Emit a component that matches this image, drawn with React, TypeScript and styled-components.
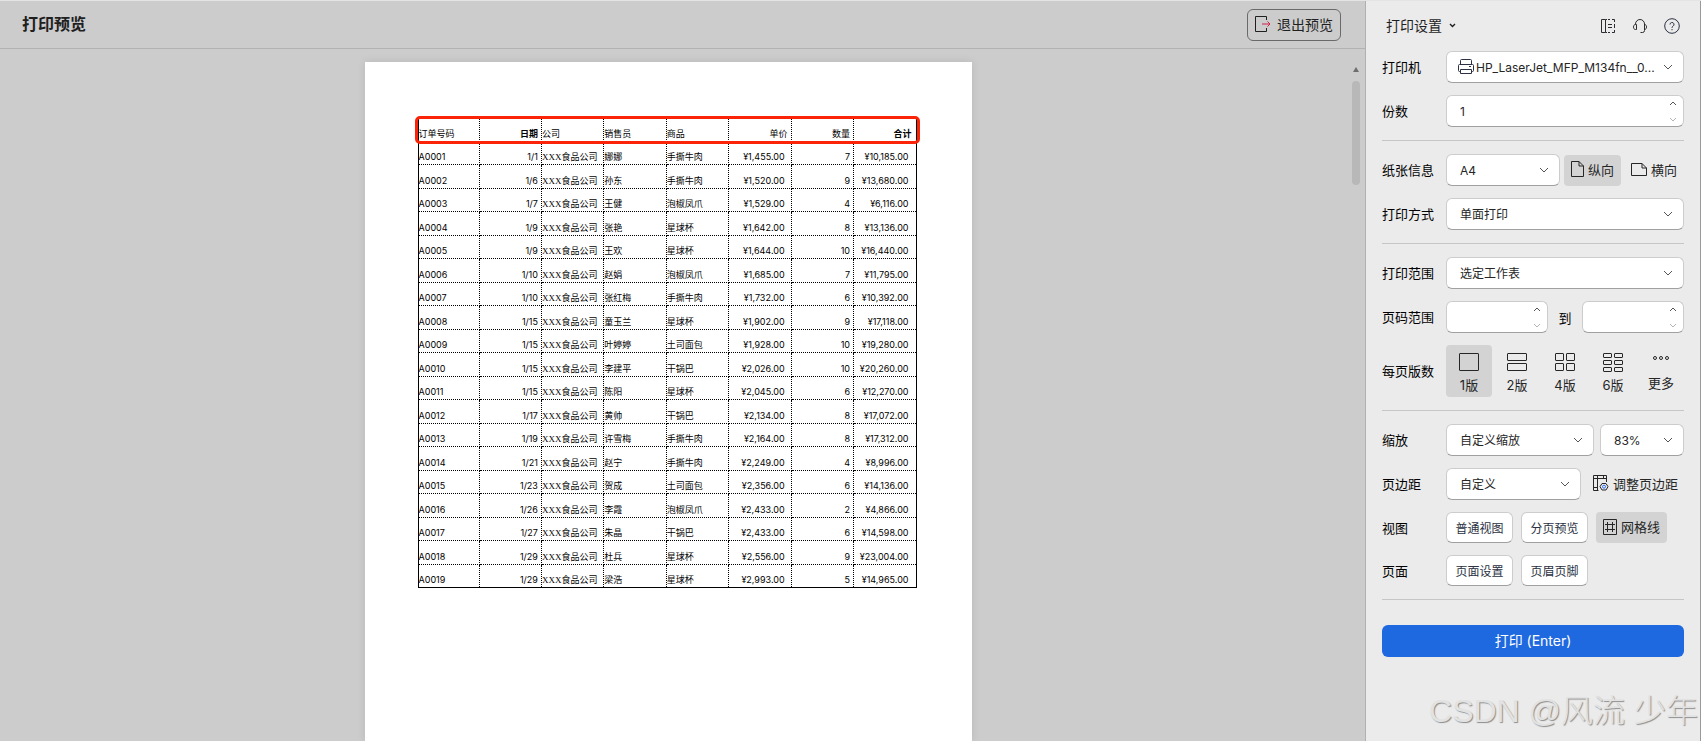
import React from "react";
import styled, { createGlobalStyle, css } from "styled-components";

const GlobalStyle = createGlobalStyle`
  *, *::before, *::after { box-sizing: border-box; }
  body { margin: 0; }
  body, button, input, select {
    font-family: Inter, "Noto Sans CJK SC", sans-serif;
  }
`;

const Shell = styled.div`
  display: flex;
  height: 100vh;
  overflow: hidden;
  background: #cccccc;
  border-top: 1px solid #e4e4e4;
  color: #1f1f1f;
`;

const Main = styled.main`
  flex: 1;
  min-width: 0;
  display: flex;
  flex-direction: column;
`;

const TopBar = styled.header`
  display: flex;
  align-items: center;
  justify-content: space-between;
  height: 48px;
  flex-shrink: 0;
  padding: 0 24px 0 22px;
  border-bottom: 1px solid #b2b2b2;
`;

const Title = styled.h1`
  margin: 0;
  padding-bottom: 2px;
  font-size: 16px;
  line-height: 24px;
  font-weight: 600;
`;

const ExitButton = styled.button`
  display: flex;
  align-items: center;
  gap: 6px;
  height: 32px;
  padding: 0 7px 2px;
  border: 1px solid #6a6a6a;
  border-radius: 6px;
  background: transparent;
  color: #1f1f1f;
  font-size: 14px;
`;

const Stage = styled.div`
  flex: 1;
  min-height: 0;
  display: grid;
  grid-template-columns: 1fr 29px;
`;

const Sheet = styled.section`
  justify-self: center;
  width: 607px;
  margin-top: 13px;
  padding: 56px 55px 0 53px;
  background: #ffffff;
  box-shadow: 0 0 8px rgba(0, 0, 0, 0.1);
`;

const ScrollTrack = styled.div`
  display: flex;
  flex-direction: column;
  align-items: flex-end;
  gap: 9px;
  padding: 18px 5px 0 0;
`;

const ScrollUp = styled.svg`
  margin-right: 1px;
`;

const ScrollThumb = styled.div`
  width: 8px;
  height: 104px;
  border-radius: 4px;
  background: #b8b8b8;
`;

const TableFrame = styled.div`
  position: relative;
`;

const HeaderHighlight = styled.div`
  position: absolute;
  top: -2px;
  left: -3px;
  right: -3px;
  height: 28px;
  border: 3px solid #fb2408;
  border-radius: 5px;
`;

const Orders = styled.table`
  width: 100%;
  table-layout: fixed;
  border-collapse: collapse;
  border: 1px solid #000000;
  color: #000000;
  font-size: 9px;
  line-height: 12px;

  tr { height: 23px; }
  tbody tr:nth-child(even) { height: 24px; }
  th:first-child { width: 61px; }
`;

const cell = css<{ $end?: number }>`
  padding: 0 ${(p) => p.$end ?? 0}px 1px 0;
  border: 1px dotted #000000;
  text-align: ${(p) => (p.$end ? "right" : "left")};
  vertical-align: bottom;
  white-space: nowrap;
`;

const HeadCell = styled.th<{ $end?: number; $strong?: boolean }>`
  ${cell}
  font-weight: ${(p) => (p.$strong ? 700 : 400)};
`;

const Cell = styled.td<{ $end?: number; $serif?: boolean }>`
  ${cell}
  font-family: ${(p) => (p.$serif ? '"Liberation Serif"' : "Inter")}, "Noto Sans CJK SC", sans-serif;
`;

const Panel = styled.aside`
  flex: 0 0 336px;
  display: flex;
  flex-direction: column;
  padding: 0 16px;
  border-left: 1px solid #b0b0b0;
  border-right: 1px solid #9a9a9a;
  background: #ebebeb;
`;

const PanelHead = styled.div`
  display: flex;
  align-items: center;
  justify-content: space-between;
  height: 50px;
  padding: 0 4px;
`;

const PanelTitle = styled.button`
  display: flex;
  align-items: center;
  gap: 7px;
  padding: 0 0 2px;
  border: 0;
  background: none;
  color: #1f1f1f;
  font-size: 14px;
`;

const Tools = styled.div`
  display: flex;
  gap: 16px;
`;

const IconButton = styled.button`
  display: flex;
  padding: 0;
  border: 0;
  background: none;
  color: #2c2c30;
`;

const Group = styled.div`
  display: flex;
  flex-direction: column;
  gap: 12px;
  padding-bottom: 13px;
  margin-bottom: 13px;
  border-bottom: 1px solid #c6c6c6;
`;

const Row = styled.div`
  display: flex;
  align-items: center;
`;

const RowLabel = styled.label`
  flex: 0 0 64px;
  color: #000000;
  font-size: 13px;
  line-height: 20px;
`;

const Controls = styled.div<{ $gap?: number }>`
  flex: 1;
  min-width: 0;
  display: flex;
  align-items: center;
  gap: ${(p) => p.$gap ?? 8}px;
`;

const raised = css`
  border: 1px solid #cccccc;
  border-bottom-color: #a0a0a0;
  border-radius: 6px;
  background: #ffffff;
`;

const Field = styled.div<{ $width?: number }>`
  ${raised}
  flex: ${(p) => (p.$width ? `0 0 ${p.$width}px` : "1")};
  min-width: 0;
  display: grid;
  align-items: center;
  height: 32px;

  > * { grid-area: 1 / 1; }
`;

const SelectInput = styled.select<{ $icon?: boolean }>`
  appearance: none;
  width: 100%;
  height: 30px;
  padding: 0 ${(p) => (p.$icon ? 24 : 28)}px 0 ${(p) => (p.$icon ? 29 : 13)}px;
  border: 0;
  border-radius: 6px;
  background: transparent;
  color: #262626;
  font-size: 12px;
`;

const FieldChevron = styled.svg`
  justify-self: end;
  margin-right: 10px;
  pointer-events: none;
`;

const FieldIcon = styled.svg`
  margin-left: 11px;
  pointer-events: none;
`;

const NumberInput = styled.input`
  width: 100%;
  height: 30px;
  padding: 0 24px 0 13px;
  border: 0;
  border-radius: 6px;
  background: transparent;
  color: #262626;
  font-size: 12px;
`;

const Stepper = styled.div`
  justify-self: end;
  display: flex;
  flex-direction: column;
  justify-content: space-between;
  height: 30px;
  padding: 5px 6px 4px 0;
`;

const StepButton = styled(IconButton)<{ $muted?: boolean }>`
  color: ${(p) => (p.$muted ? "#b4b4b4" : "#555555")};
`;

const Toggle = styled.button<{ $on?: boolean; $inset?: number }>`
  display: flex;
  align-items: center;
  gap: 4px;
  height: 31px;
  padding: 0 ${(p) => p.$inset ?? 6}px 2px;
  border: 0;
  border-radius: 4px;
  background: ${(p) => (p.$on ? "#d3d3d3" : "transparent")};
  color: #262626;
  font-size: 13px;
  white-space: nowrap;
`;

const LayoutOption = styled.button<{ $on?: boolean }>`
  display: flex;
  flex-direction: column;
  align-items: center;
  gap: 3px;
  width: 46px;
  height: 52px;
  padding: 7px 0 0;
  border: 0;
  border-radius: 4px;
  background: ${(p) => (p.$on ? "#d3d3d3" : "transparent")};
  color: #262626;
  font-size: 13px;
  line-height: 20px;
`;

const PushButton = styled.button`
  ${raised}
  width: 67px;
  height: 31px;
  padding: 0;
  color: #2b3142;
  font-size: 12px;
`;

const To = styled.span`
  flex: 0 0 34px;
  text-align: center;
  color: #000000;
  font-size: 13px;
`;

const PrintButton = styled.button`
  height: 32px;
  margin-top: 12px;
  padding: 0 0 2px;
  border: 0;
  border-radius: 6px;
  background: #1e69e0;
  color: #ffffff;
  font-size: 14px;
`;

const Watermark = styled.div`
  position: absolute;
  right: 3px;
  bottom: 6px;
  color: #e2e2e2;
  font-family: "Liberation Sans", "Noto Sans CJK SC", sans-serif;
  font-size: 32px;
  font-weight: 300;
  line-height: 48px;
  text-shadow: 1px 1px 1px #8c8c8c;
  white-space: nowrap;
  pointer-events: none;
`;

const stroke = { fill: "none", stroke: "currentColor", strokeWidth: 1 } as const;

const ChevronDown = () => (
  <FieldChevron width="10" height="6" viewBox="0 0 10 6" fill="none" stroke="#555555">
    <path d="M1 1l4 4 4-4" />
  </FieldChevron>
);

type PickerProps = { id: string; label?: string; value: string; width?: number };

const Picker = ({ id, label, value, width }: PickerProps) => (
  <Field $width={width}>
    <SelectInput id={id} aria-label={label}>
      <option>{value}</option>
    </SelectInput>
    <ChevronDown />
  </Field>
);

type SpinProps = { id: string; label?: string; value?: string };

const Spin = ({ id, label, value = "" }: SpinProps) => (
  <Field>
    <NumberInput id={id} aria-label={label} inputMode="numeric" defaultValue={value} />
    <Stepper>
      <StepButton aria-label="增加">
        <svg width="8" height="5" viewBox="0 0 8 5" {...stroke}><path d="M1 4l3-3 3 3" /></svg>
      </StepButton>
      <StepButton aria-label="减少" $muted>
        <svg width="8" height="5" viewBox="0 0 8 5" {...stroke}><path d="M1 1l3 3 3-3" /></svg>
      </StepButton>
    </Stepper>
  </Field>
);

const gridIcon = (cols: number, rows: number) => {
  const w = cols === 1 ? 19 : 8;
  const h = rows === 1 ? 17 : rows === 2 ? 7 : 4;
  const stepX = 11;
  const stepY = rows === 2 ? 10 : 7;
  return (
    <svg width="20" height="20" viewBox="0 0 20 20" {...stroke}>
      {Array.from({ length: cols * rows }, (_, i) => (
        <rect
          key={i}
          x={0.5 + (i % cols) * stepX}
          y={1.5 + Math.floor(i / cols) * stepY}
          width={w}
          height={h}
          rx="0.5"
        />
      ))}
    </svg>
  );
};

const layouts = [
  { name: "1版", icon: gridIcon(1, 1) },
  { name: "2版", icon: gridIcon(1, 2) },
  { name: "4版", icon: gridIcon(2, 2) },
  { name: "6版", icon: gridIcon(2, 3) },
  {
    name: "更多",
    icon: (
      <svg width="18" height="18" viewBox="0 0 18 18" {...stroke}>
        <circle cx="3" cy="6" r="1.5" />
        <circle cx="9" cy="6" r="1.5" />
        <circle cx="15" cy="6" r="1.5" />
      </svg>
    ),
  },
];

const orders = [
  ["A0001", "1/1", "娜娜", "手撕牛肉", "1,455.00", "7", "10,185.00"],
  ["A0002", "1/6", "孙东", "手撕牛肉", "1,520.00", "9", "13,680.00"],
  ["A0003", "1/7", "王健", "泡椒凤爪", "1,529.00", "4", "6,116.00"],
  ["A0004", "1/9", "张艳", "星球杯", "1,642.00", "8", "13,136.00"],
  ["A0005", "1/9", "王欢", "星球杯", "1,644.00", "10", "16,440.00"],
  ["A0006", "1/10", "赵娟", "泡椒凤爪", "1,685.00", "7", "11,795.00"],
  ["A0007", "1/10", "张红梅", "手撕牛肉", "1,732.00", "6", "10,392.00"],
  ["A0008", "1/15", "童玉兰", "星球杯", "1,902.00", "9", "17,118.00"],
  ["A0009", "1/15", "叶婷婷", "土司面包", "1,928.00", "10", "19,280.00"],
  ["A0010", "1/15", "李建平", "干锅巴", "2,026.00", "10", "20,260.00"],
  ["A0011", "1/15", "陈阳", "星球杯", "2,045.00", "6", "12,270.00"],
  ["A0012", "1/17", "黄帅", "干锅巴", "2,134.00", "8", "17,072.00"],
  ["A0013", "1/19", "许雪梅", "手撕牛肉", "2,164.00", "8", "17,312.00"],
  ["A0014", "1/21", "赵宁", "手撕牛肉", "2,249.00", "4", "8,996.00"],
  ["A0015", "1/23", "贺成", "土司面包", "2,356.00", "6", "14,136.00"],
  ["A0016", "1/26", "李霞", "泡椒凤爪", "2,433.00", "2", "4,866.00"],
  ["A0017", "1/27", "朱晶", "干锅巴", "2,433.00", "6", "14,598.00"],
  ["A0018", "1/29", "杜兵", "星球杯", "2,556.00", "9", "23,004.00"],
  ["A0019", "1/29", "梁浩", "星球杯", "2,993.00", "5", "14,965.00"],
];

const OrderTable = () => (
  <TableFrame>
    <Orders>
      <thead>
        <tr>
          <HeadCell>订单号码</HeadCell>
          <HeadCell $end={3} $strong>日期</HeadCell>
          <HeadCell>公司</HeadCell>
          <HeadCell>销售员</HeadCell>
          <HeadCell>商品</HeadCell>
          <HeadCell $end={3}>单价</HeadCell>
          <HeadCell $end={3}>数量</HeadCell>
          <HeadCell $end={4} $strong>合计</HeadCell>
        </tr>
      </thead>
      <tbody>
        {orders.map(([id, date, seller, product, price, count, total]) => (
          <tr key={id}>
            <Cell>{id}</Cell>
            <Cell $end={3}>{date}</Cell>
            <Cell $serif>XXX食品公司</Cell>
            <Cell>{seller}</Cell>
            <Cell>{product}</Cell>
            <Cell $end={6}>¥{price}</Cell>
            <Cell $end={3}>{count}</Cell>
            <Cell $end={7}>¥{total}</Cell>
          </tr>
        ))}
      </tbody>
    </Orders>
    <HeaderHighlight />
  </TableFrame>
);

const Settings = () => (
  <Panel>
    <PanelHead>
      <PanelTitle>
        打印设置
        <svg width="7" height="5" viewBox="0 0 7 5" fill="none" stroke="currentColor" strokeWidth="1.4">
          <path d="M1 1l2.500 2.500L6 1" />
        </svg>
      </PanelTitle>
      <Tools>
        <IconButton aria-label="侧栏">
          <svg width="16" height="16" viewBox="0 0 16 16" {...stroke}>
            <path d="M5.500 1.500h-4v13h4zM8 1.500h2M12 1.500h2.500V4M14.500 6v4M14.500 12v2.500H12M10 14.500H8M5.500 1.500H7M5.500 14.500H7M8 6.500h4M8 9.500h4" />
          </svg>
        </IconButton>
        <IconButton aria-label="客服">
          <svg width="16" height="16" viewBox="0 0 16 16" {...stroke}>
            <path d="M3.500 6.500V6a4.500 4.500 0 0 1 9 0v6.500a2 2 0 0 1-2 2H8.500M4.500 6.500h-1C2 6.500 1.500 7.800 1.500 9s.5 2.500 2 2.500h1zM12.500 6.500c1.500 0 2 1.300 2 2.500s-.5 2.500-2 2.500" />
          </svg>
        </IconButton>
        <IconButton aria-label="帮助">
          <svg width="16" height="16" viewBox="0 0 16 16" fill="none" stroke="#2b3142">
            <circle cx="8" cy="8" r="7.300" />
            <path d="M6 6.500a2 2 0 1 1 3 1.700c-.7.4-1 .8-1 1.600M8 11v1.200" />
          </svg>
        </IconButton>
      </Tools>
    </PanelHead>

    <Group>
      <Row>
        <RowLabel htmlFor="printer">打印机</RowLabel>
        <Controls>
          <Field>
            <FieldIcon width="16" height="16" viewBox="0 0 16 16" fill="none" stroke="#2b3142">
              <path d="M2.500 5.500v-4a1 1 0 0 1 1-1h9a1 1 0 0 1 1 1v4M2.500 12.500h-1a1 1 0 0 1-1-1v-5a1 1 0 0 1 1-1h13a1 1 0 0 1 1 1v5a1 1 0 0 1-1 1h-1M2.500 10.500h11v4h-11zM11 7.500h2" />
            </FieldIcon>
            <SelectInput id="printer" $icon>
              <option>HP_LaserJet_MFP_M134fn__0...</option>
            </SelectInput>
            <ChevronDown />
          </Field>
        </Controls>
      </Row>
      <Row>
        <RowLabel htmlFor="copies">份数</RowLabel>
        <Controls>
          <Spin id="copies" value="1" />
        </Controls>
      </Row>
    </Group>

    <Group>
      <Row>
        <RowLabel htmlFor="paper">纸张信息</RowLabel>
        <Controls $gap={4}>
          <Picker id="paper" value="A4" width={114} />
          <Toggle $on $inset={7}>
            <svg width="13" height="16" viewBox="0 0 13 16" {...stroke}>
              <path d="M.5.500h7.500l4.500 4.500v10.500H.5zM8 .5V5h4.500" />
            </svg>
            纵向
          </Toggle>
          <Toggle>
            <svg width="16" height="13" viewBox="0 0 16 13" {...stroke}>
              <path d="M.5.500h10.500l4.500 4.500v7.500H.5zM11 .5V5h4.500" />
            </svg>
            横向
          </Toggle>
        </Controls>
      </Row>
      <Row>
        <RowLabel htmlFor="duplex">打印方式</RowLabel>
        <Controls>
          <Picker id="duplex" value="单面打印" />
        </Controls>
      </Row>
    </Group>

    <Group>
      <Row>
        <RowLabel htmlFor="range">打印范围</RowLabel>
        <Controls>
          <Picker id="range" value="选定工作表" />
        </Controls>
      </Row>
      <Row>
        <RowLabel htmlFor="from">页码范围</RowLabel>
        <Controls $gap={0}>
          <Spin id="from" />
          <To>到</To>
          <Spin id="to" label="到" />
        </Controls>
      </Row>
      <Row>
        <RowLabel as="span">每页版数</RowLabel>
        <Controls $gap={2}>
          {layouts.map((l, i) => (
            <LayoutOption key={l.name} $on={i === 0}>
              {l.icon}
              {l.name}
            </LayoutOption>
          ))}
        </Controls>
      </Row>
    </Group>

    <Group>
      <Row>
        <RowLabel htmlFor="zoom">缩放</RowLabel>
        <Controls $gap={6}>
          <Picker id="zoom" value="自定义缩放" />
          <Picker id="percent" label="缩放比例" value="83%" width={84} />
        </Controls>
      </Row>
      <Row>
        <RowLabel htmlFor="margin">页边距</RowLabel>
        <Controls $gap={6}>
          <Picker id="margin" value="自定义" />
          <Toggle>
            <svg width="16" height="16" viewBox="0 0 16 16" {...stroke}>
              <path d="M.5.500h13V7M.5.500v15h5M4.500.5v15M.5 3.500h13M.5 12.500h4M10.500.5v3" />
              <path d="M9 8.500h4l2 3.200-2 3.300H9l-2-3.300z" />
              <circle cx="11" cy="11.700" r="1.500" stroke="#2f6bff" />
            </svg>
            调整页边距
          </Toggle>
        </Controls>
      </Row>
      <Row>
        <RowLabel as="span">视图</RowLabel>
        <Controls>
          <PushButton>普通视图</PushButton>
          <PushButton>分页预览</PushButton>
          <Toggle $on $inset={7}>
            <svg width="14" height="16" viewBox="0 0 14 16" {...stroke}>
              <path d="M.5.500h13v15H.5zM4.500 3v10M9.500 3v10M2 5.500h10M2 10.500h10" />
            </svg>
            网格线
          </Toggle>
        </Controls>
      </Row>
      <Row>
        <RowLabel as="span">页面</RowLabel>
        <Controls>
          <PushButton>页面设置</PushButton>
          <PushButton>页眉页脚</PushButton>
        </Controls>
      </Row>
    </Group>

    <PrintButton>打印 (Enter)</PrintButton>
  </Panel>
);

export default function App() {
  return (
    <Shell>
      <GlobalStyle />
      <Main>
        <TopBar>
          <Title>打印预览</Title>
          <ExitButton>
            <svg width="16" height="16" viewBox="0 0 16 16" {...stroke}>
              <path d="M11.500 4V.5H.5v15h11V12" />
              <path d="M7 8h8M12.500 5.500L15 8l-2.500 2.500" stroke="#d0214b" />
            </svg>
            退出预览
          </ExitButton>
        </TopBar>
        <Stage>
          <Sheet>
            <OrderTable />
          </Sheet>
          <ScrollTrack>
            <ScrollUp width="6" height="5" viewBox="0 0 6 5" fill="#6e6e6e">
              <path d="M3 0l3 5H0z" />
            </ScrollUp>
            <ScrollThumb />
          </ScrollTrack>
        </Stage>
      </Main>
      <Settings />
      <Watermark>CSDN @风流 少年</Watermark>
    </Shell>
  );
}
